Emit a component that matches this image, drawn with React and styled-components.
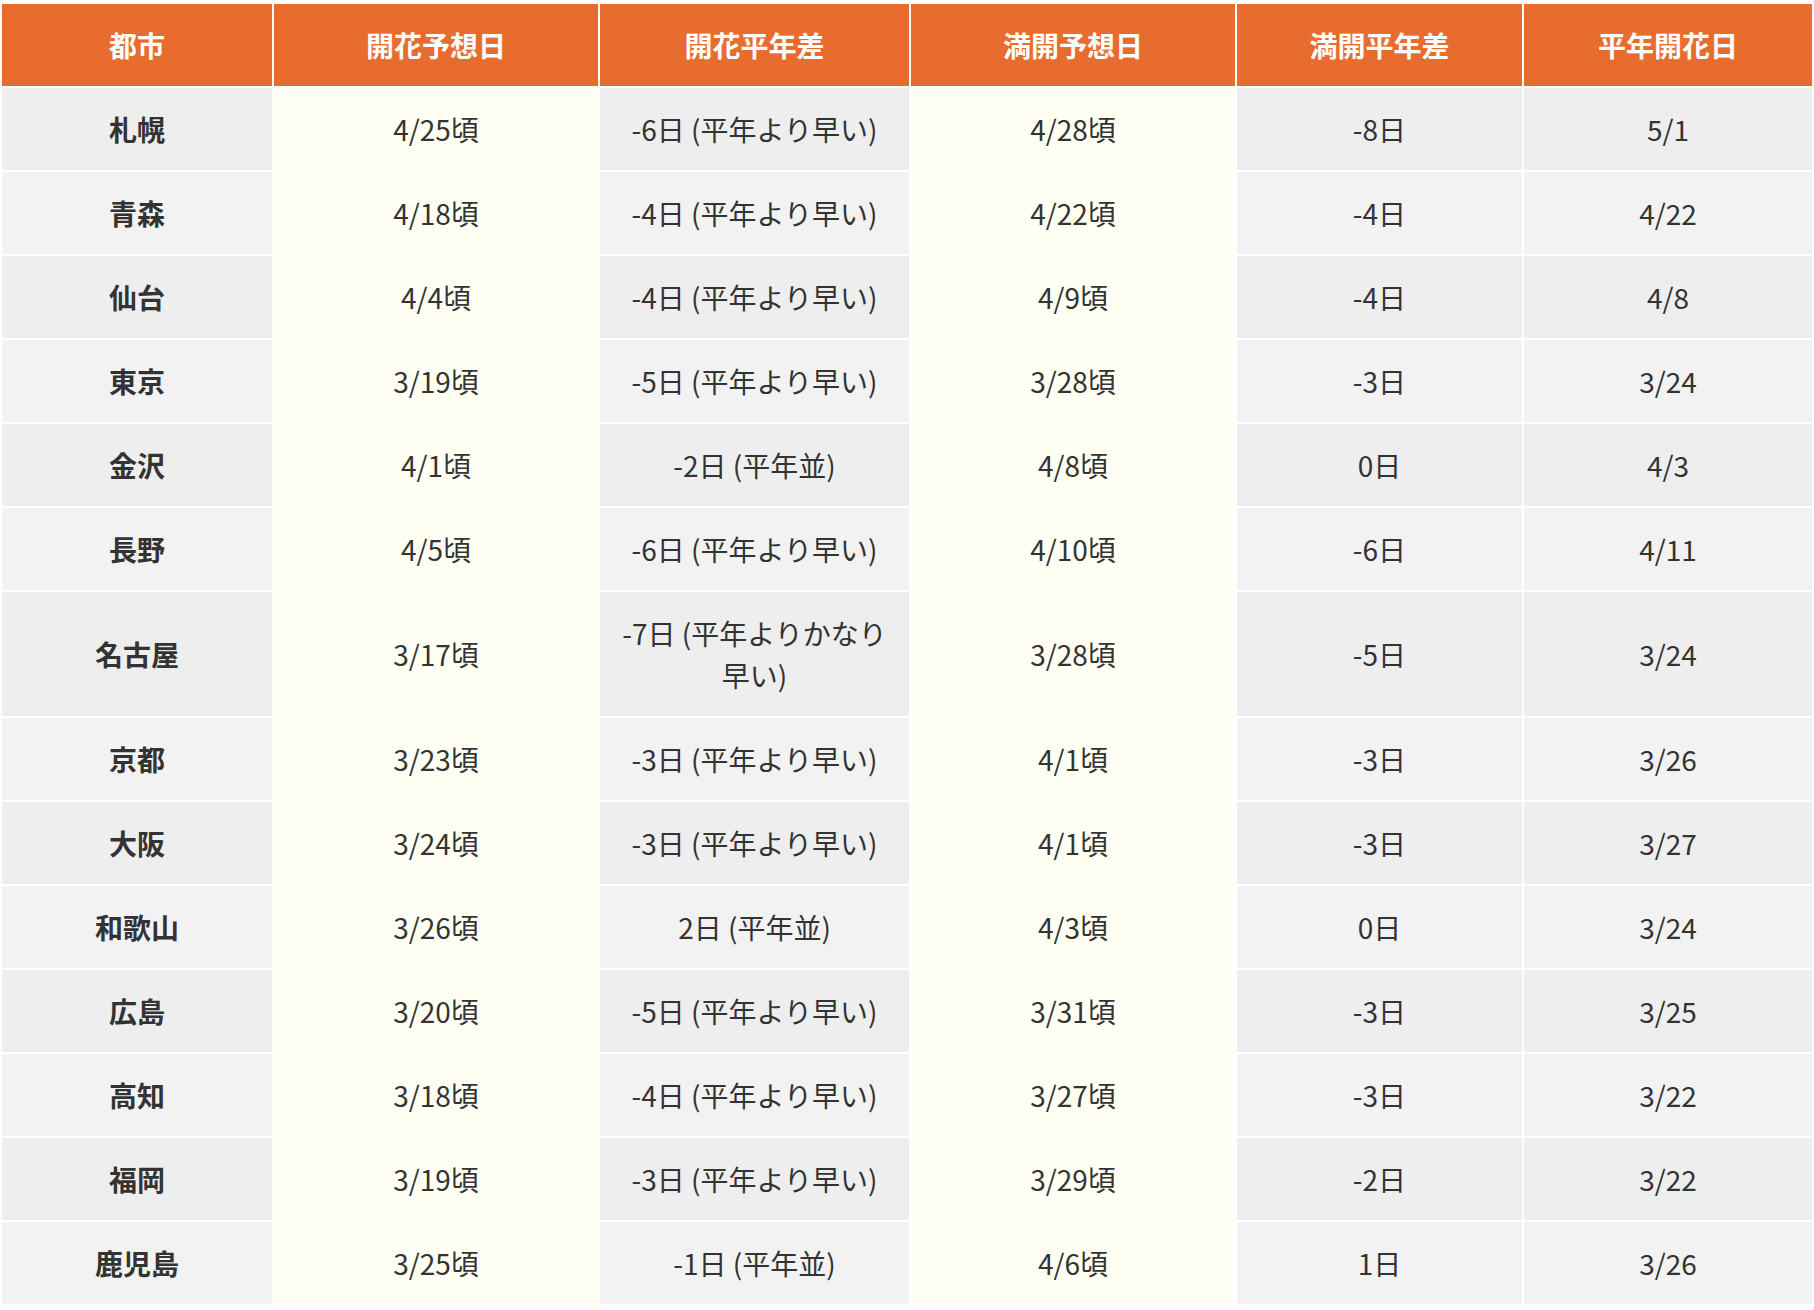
import styled, { createGlobalStyle } from "styled-components";

const GlobalStyle = createGlobalStyle`
  html, body {
    margin: 0;
    padding: 0;
    background: #ffffff;
    overflow: hidden;
  }
  body {
    font-family: "Noto Sans CJK JP", "Noto Sans", sans-serif;
    color: #333333;
  }
`;

const columns = [
  { label: "都市", width: 270 },
  { label: "開花予想日", width: 324 },
  { label: "開花平年差", width: 309 },
  { label: "満開予想日", width: 324 },
  { label: "満開平年差", width: 285 },
  { label: "平年開花日", width: 288 },
];

const rows = [
  ["札幌", "4/25頃", "-6日 (平年より早い)", "4/28頃", "-8日", "5/1"],
  ["青森", "4/18頃", "-4日 (平年より早い)", "4/22頃", "-4日", "4/22"],
  ["仙台", "4/4頃", "-4日 (平年より早い)", "4/9頃", "-4日", "4/8"],
  ["東京", "3/19頃", "-5日 (平年より早い)", "3/28頃", "-3日", "3/24"],
  ["金沢", "4/1頃", "-2日 (平年並)", "4/8頃", "0日", "4/3"],
  ["長野", "4/5頃", "-6日 (平年より早い)", "4/10頃", "-6日", "4/11"],
  ["名古屋", "3/17頃", "-7日 (平年よりかなり早い)", "3/28頃", "-5日", "3/24"],
  ["京都", "3/23頃", "-3日 (平年より早い)", "4/1頃", "-3日", "3/26"],
  ["大阪", "3/24頃", "-3日 (平年より早い)", "4/1頃", "-3日", "3/27"],
  ["和歌山", "3/26頃", "2日 (平年並)", "4/3頃", "0日", "3/24"],
  ["広島", "3/20頃", "-5日 (平年より早い)", "3/31頃", "-3日", "3/25"],
  ["高知", "3/18頃", "-4日 (平年より早い)", "3/27頃", "-3日", "3/22"],
  ["福岡", "3/19頃", "-3日 (平年より早い)", "3/29頃", "-2日", "3/22"],
  ["鹿児島", "3/25頃", "-1日 (平年並)", "4/6頃", "1日", "3/26"],
];

// 予想日の列だけ薄い黄色
const highlighted = [1, 3];

function App() {
  return (
    <Wrapper>
      <GlobalStyle />
      <Table>
        <colgroup>
          {columns.map((c, i) => (
            <col key={i} style={{ width: c.width }} />
          ))}
        </colgroup>
        <thead>
          <tr>
            {columns.map((c, i) => (
              <Head key={i}>{c.label}</Head>
            ))}
          </tr>
        </thead>
        <tbody>
          {rows.map((r, ri) => (
            <Row key={ri} $odd={ri % 2 === 0}>
              {r.map((v, ci) =>
                ci === 0 ? (
                  <City key={ci}>{v}</City>
                ) : (
                  <Cell key={ci} $forecast={highlighted.includes(ci)}>
                    {v}
                  </Cell>
                )
              )}
            </Row>
          ))}
        </tbody>
      </Table>
    </Wrapper>
  );
}

export default App;

const Wrapper = styled.div`
  padding-top: 2px;
  width: 1814px;
`;

const Table = styled.table`
  border-collapse: separate;
  border-spacing: 2px;
  table-layout: fixed;
  width: 1814px;
  margin: 0;
  font-size: 28px;
  line-height: 42px;
`;

const Head = styled.th`
  background-color: #e96c2f;
  color: #ffffff;
  font-weight: 700;
  text-align: center;
  padding: 20px 16px;
  white-space: nowrap;
`;

const Row = styled.tr`
  --rowGray: ${(p) => (p.$odd ? "#eeeeee" : "#f2f2f2")};
`;

const Cell = styled.td`
  background-color: ${(p) => (p.$forecast ? "#fffff3" : "var(--rowGray)")};
  color: #333333;
  font-weight: 400;
  text-align: center;
  vertical-align: middle;
  padding: 20px 16px;
`;

const City = styled(Cell)`
  font-weight: 700;
`;
